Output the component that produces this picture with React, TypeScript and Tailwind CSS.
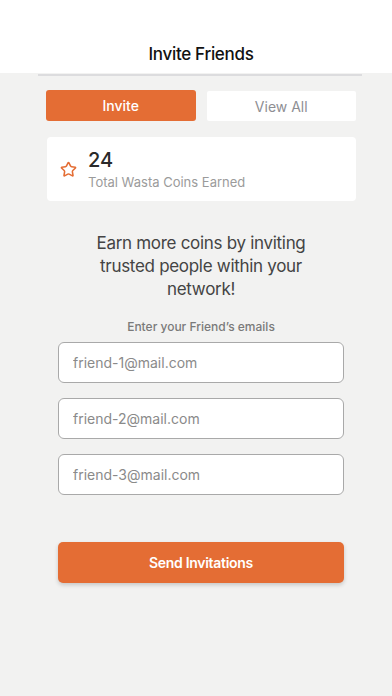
import { Star } from "lucide-react";

const emails = ["friend-1@mail.com", "friend-2@mail.com", "friend-3@mail.com"];

const App = () => {
    return (
        <div className="min-h-[696px] bg-[#f2f2f1] font-['Inter',sans-serif]">
            <div className="h-[73px] bg-white flex items-end justify-center pb-[7px] pl-[10px]">
                <h1 className="text-[17px] leading-[23px] tracking-[-0.3px] font-medium text-[#111]">Invite Friends</h1>
            </div>
            <div className="ml-[38px] mr-[30px] mt-[1px] h-[2px] bg-[#dcdcde]" />

            <div className="pl-[46px] pr-[36px]">
                <div className="mt-[14px] grid grid-cols-2 gap-[11px]">
                    <button className="h-[31px] rounded-[3px] bg-[#e46d34] text-[14px] font-medium text-white">
                        Invite
                    </button>
                    <button className="h-[30px] mt-[1px] rounded-[2px] bg-white text-[14px] text-[#8e8e93]">
                        View All
                    </button>
                </div>

                <div className="mt-[16px] ml-[1px] h-[64px] rounded-[4px] bg-white flex items-center pl-[13px]">
                    <Star size={17} strokeWidth={2.2} color="#e46d34" />
                    <div className="ml-[11px] flex flex-col">
                        <span className="text-[20px] leading-[26px] font-medium text-[#2a2a2a]">24</span>
                        <span className="text-[13px] leading-[18px] text-[#9b9b9b]">Total Wasta Coins Earned</span>
                    </div>
                </div>

                <p className="mt-[31px] text-center text-[17px] leading-[23px] tracking-[-0.3px] text-[#444] px-[40px]">
                    Earn more coins by inviting trusted people within your network!
                </p>

                <p className="mt-[18px] text-center text-[12px] leading-[16px] font-medium text-[#7a7a7a]">
                    Enter your Friend’s emails
                </p>

                <div className="mt-[7px] px-[12px] flex flex-col gap-[15px]">
                    {emails.map((email) => (
                        <input
                            key={email}
                            placeholder={email}
                            className="h-[41px] w-full rounded-[6px] border border-[#a9a9a9] bg-white pl-[14px] text-[14px] text-[#333] placeholder:text-[#8a8a8a] outline-none"
                        />
                    ))}
                </div>

                <div className="mt-[47px] px-[12px]">
                    <button className="h-[41px] w-full rounded-[5px] bg-[#e46d34] text-[14px] tracking-[-0.3px] font-semibold text-white shadow-[0_2px_4px_rgba(0,0,0,0.18)]">
                        Send Invitations
                    </button>
                </div>
            </div>
        </div>
    );
};

export default App;
